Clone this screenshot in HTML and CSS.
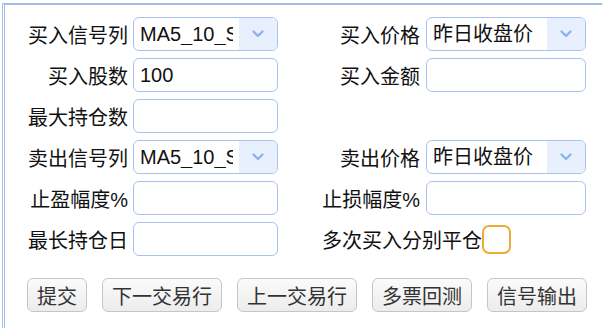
FILE: index.html
```html
<!DOCTYPE html>
<html lang="zh">
<head>
  <meta charset="UTF-8" />
  <title>回测参数</title>
  <meta name="viewport" content="width=device-width, initial-scale=1.0" />
  <link rel="stylesheet" href="styles.css">
</head>
<body>
  <div class="frame">
    <div class="form-grid">
      <label class="label">买入信号列</label>
      <div class="select">
        <select><option>MA5_10_SMA20</option></select>
        <span class="arrow"><svg width="12" height="8" viewBox="0 0 12 8"><polyline points="1.5,1.5 6,6 10.5,1.5" /></svg></span>
      </div>
      <label class="label label-right">买入价格</label>
      <div class="select">
        <select><option>昨日收盘价</option></select>
        <span class="arrow"><svg width="12" height="8" viewBox="0 0 12 8"><polyline points="1.5,1.5 6,6 10.5,1.5" /></svg></span>
      </div>

      <label class="label">买入股数</label>
      <input type="text" class="field" value="100">
      <label class="label label-right">买入金额</label>
      <input type="text" class="field">

      <label class="label">最大持仓数</label>
      <input type="text" class="field">
      <div></div>
      <div></div>

      <label class="label">卖出信号列</label>
      <div class="select">
        <select><option>MA5_10_SMA20</option></select>
        <span class="arrow"><svg width="12" height="8" viewBox="0 0 12 8"><polyline points="1.5,1.5 6,6 10.5,1.5" /></svg></span>
      </div>
      <label class="label label-right">卖出价格</label>
      <div class="select">
        <select><option>昨日收盘价</option></select>
        <span class="arrow"><svg width="12" height="8" viewBox="0 0 12 8"><polyline points="1.5,1.5 6,6 10.5,1.5" /></svg></span>
      </div>

      <label class="label">止盈幅度%</label>
      <input type="text" class="field">
      <label class="label label-right">止损幅度%</label>
      <input type="text" class="field">

      <label class="label">最长持仓日</label>
      <input type="text" class="field">
      <label class="check-field">多次买入分别平仓<input type="checkbox" class="check"></label>
    </div>

    <div class="actions">
      <button>提交</button>
      <button>下一交易行</button>
      <button>上一交易行</button>
      <button>多票回测</button>
      <button>信号输出</button>
    </div>
  </div>
</body>
</html>
```

FILE: styles.css
```css
body {
  margin: 0;
  background: #ffffff;
  font-family: "Liberation Sans", "Noto Sans CJK SC", sans-serif;
  font-size: 20px;
  color: #111;
}

.frame {
  margin: 3px 0 0 2px;
  height: 330px;
  border-top: 2px solid #a4bcec;
  border-left: 3px double #a4bcec;
}

.form-grid {
  display: grid;
  grid-template-columns: 128px 145px 148px 160px;
  grid-auto-rows: 34px;
  row-gap: 7px;
  padding-top: 12px;
}

.label {
  display: flex;
  align-items: center;
  justify-content: flex-end;
  padding-right: 5px;
  white-space: nowrap;
}

.label-right {
  padding-right: 6px;
}

.field {
  box-sizing: border-box;
  width: 100%;
  height: 34px;
  margin: 0;
  padding: 0 6px;
  border: 1px solid #a9c2f2;
  border-radius: 6px;
  font: inherit;
  color: #111;
  background: #fff;
  outline: none;
}

.select {
  box-sizing: border-box;
  display: flex;
  height: 34px;
  border: 1px solid #a9c2f2;
  border-radius: 6px;
  overflow: hidden;
  background: #fff;
}

.select select {
  flex: 1;
  min-width: 0;
  appearance: none;
  -webkit-appearance: none;
  border: none;
  background: transparent;
  padding: 0 6px;
  font: inherit;
  color: #111;
  outline: none;
}

.select .arrow {
  width: 38px;
  flex-shrink: 0;
  display: flex;
  align-items: center;
  justify-content: center;
  background: #e8f0fe;
}

.arrow polyline {
  fill: none;
  stroke: #8db3ee;
  stroke-width: 2.4;
  stroke-linecap: round;
  stroke-linejoin: round;
}

.check-field {
  grid-column: 3 / 5;
  display: flex;
  align-items: center;
  padding-left: 44px;
  white-space: nowrap;
}

.check {
  appearance: none;
  -webkit-appearance: none;
  box-sizing: border-box;
  width: 29px;
  height: 29px;
  margin: 0;
  border: 2px solid #f2a93b;
  border-radius: 7px;
  background: #fff;
}

.actions {
  display: flex;
  gap: 15px;
  margin-top: 22px;
  padding-left: 22px;
}

.actions button {
  height: 34px;
  padding: 0 9px;
  border: 1px solid #c6c6c6;
  border-radius: 6px;
  background: linear-gradient(#fbfbfb, #ececec);
  font-family: "Noto Sans CJK SC", sans-serif;
  font-size: 20px;
  color: #333;
  cursor: pointer;
}
```
